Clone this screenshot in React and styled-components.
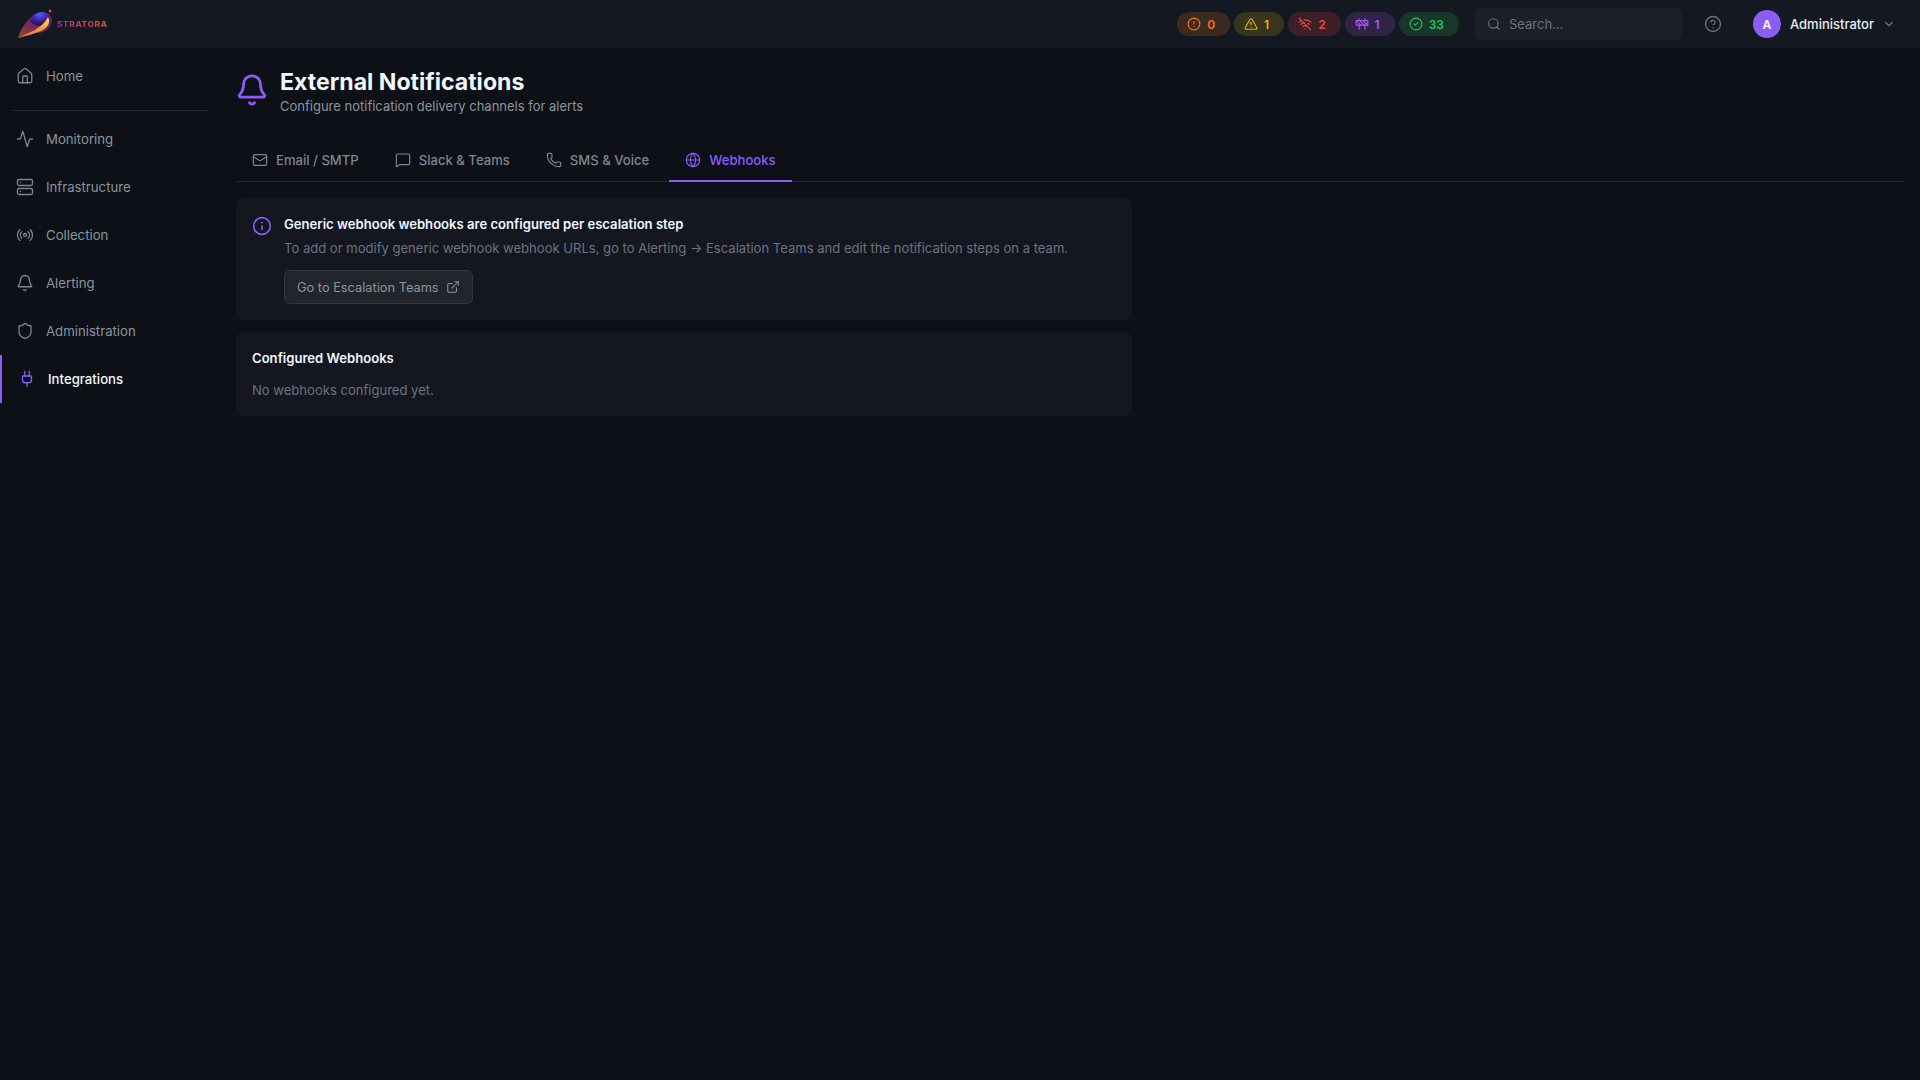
import React from "react";
import styled, { createGlobalStyle } from "styled-components";
import {
  Activity,
  Bell,
  ChevronDown,
  CircleAlert,
  CircleCheck,
  CircleHelp,
  Construction,
  ExternalLink,
  Globe,
  House,
  Info,
  Mail,
  MessageSquare,
  Phone,
  Plug,
  Radio,
  Search,
  Server,
  Shield,
  TriangleAlert,
  WifiOff,
} from "lucide-react";

const GlobalStyle = createGlobalStyle`
  html, body { margin: 0; padding: 0; height: 100%; background: #0d1017; }
  #root { height: 100%; }
  * { box-sizing: border-box; }
  body { font-family: Inter, "Noto Sans", sans-serif; }
`;

const badges = [
  { icon: CircleAlert, count: 0, color: "#f97316", bg: "#3a2a20" },
  { icon: TriangleAlert, count: 1, color: "#eab308", bg: "#38351e" },
  { icon: WifiOff, count: 2, color: "#ef4444", bg: "#3b2127" },
  { icon: Construction, count: 1, color: "#a855f7", bg: "#2f2446" },
  { icon: CircleCheck, count: 33, color: "#22c55e", bg: "#1a3529" },
];

const navItems = [
  { icon: Activity, label: "Monitoring" },
  { icon: Server, label: "Infrastructure" },
  { icon: Radio, label: "Collection" },
  { icon: Bell, label: "Alerting" },
  { icon: Shield, label: "Administration" },
  { icon: Plug, label: "Integrations", active: true },
];

const tabs = [
  { icon: Mail, label: "Email / SMTP" },
  { icon: MessageSquare, label: "Slack & Teams" },
  { icon: Phone, label: "SMS & Voice" },
  { icon: Globe, label: "Webhooks", active: true },
];

const Logo = () => (
  <svg width="36" height="30" viewBox="0 0 36 30">
    <defs>
      <linearGradient id="tail" x1="0" y1="1" x2="1" y2="0">
        <stop offset="0" stopColor="#f97316" />
        <stop offset="0.5" stopColor="#c42a90" />
        <stop offset="1" stopColor="#6d28d9" />
      </linearGradient>
      <linearGradient id="streak" x1="0" y1="1" x2="1" y2="0">
        <stop offset="0" stopColor="#fb7185" />
        <stop offset="0.55" stopColor="#fb923c" />
        <stop offset="1" stopColor="#fde047" />
      </linearGradient>
      <radialGradient id="globe" cx="0.5" cy="0.2" r="0.8">
        <stop offset="0" stopColor="#4560f0" />
        <stop offset="0.55" stopColor="#4220a8" />
        <stop offset="1" stopColor="#17133f" />
      </radialGradient>
    </defs>
    <path d="M1 29 C4 19 11 8 21 4 C29 1 35 6 35 12 C34 20 27 24 20 24 C14 25 7 27 1 29 Z" fill="url(#tail)" opacity="0.55" />
    <path d="M13 12 C15 6 21 2 27 3 C32 4 33 9 31 12 C27 17 19 19 13 12 Z" fill="url(#globe)" />
    <path d="M1 29 C11 24 25 20 31 8 C34 13 31 19 24 22 C16 25 8 27 1 29 Z" fill="url(#streak)" />
    <path d="M33 0 L33.6 1.4 L35 2 L33.6 2.6 L33 4 L32.4 2.6 L31 2 L32.4 1.4 Z" fill="#fb7185" />
  </svg>
);

export default function App() {
  return (
    <>
      <GlobalStyle />
      <Page>
        <TopBar>
          <Brand>
            <Logo />
            <BrandName>STRATORA</BrandName>
          </Brand>
          <TopRight>
            <Badges>
              {badges.map((b, i) => (
                <Badge key={i} $color={b.color} $bg={b.bg}>
                  <b.icon size={14} strokeWidth={2} />
                  <span>{b.count}</span>
                </Badge>
              ))}
            </Badges>
            <SearchBox>
              <Search size={14} color="#6b7280" />
              <SearchText>Search...</SearchText>
            </SearchBox>
            <HelpButton>
              <CircleHelp size={18} strokeWidth={1.75} />
            </HelpButton>
            <UserMenu>
              <Avatar>A</Avatar>
              <UserName>Administrator</UserName>
              <ChevronDown size={14} color="#6b7280" />
            </UserMenu>
          </TopRight>
        </TopBar>
        <Body>
          <Sidebar>
            <NavItem $short>
              <House size={18} strokeWidth={1.75} />
              <span>Home</span>
            </NavItem>
            <Divider />
            {navItems.map((item) => (
              <NavItem key={item.label} $active={item.active}>
                <item.icon size={18} strokeWidth={1.75} />
                <span>{item.label}</span>
              </NavItem>
            ))}
          </Sidebar>
          <Main>
            <Header>
              <HeaderIcon>
                <Bell size={34} strokeWidth={2} />
              </HeaderIcon>
              <div>
                <Title>External Notifications</Title>
                <Subtitle>Configure notification delivery channels for alerts</Subtitle>
              </div>
            </Header>
            <TabBar>
              {tabs.map((t) => (
                <Tab key={t.label} $active={t.active}>
                  <t.icon size={16} strokeWidth={1.75} />
                  <span>{t.label}</span>
                </Tab>
              ))}
            </TabBar>
            <Cards>
              <Card>
                <InfoIcon>
                  <Info size={20} strokeWidth={2} />
                </InfoIcon>
                <div>
                  <CardTitle>Generic webhook webhooks are configured per escalation step</CardTitle>
                  <CardText>
                    To add or modify generic webhook webhook URLs, go to Alerting → Escalation Teams and edit the notification steps on a team.
                  </CardText>
                  <LinkButton>
                    <span>Go to Escalation Teams</span>
                    <ExternalLink size={14} strokeWidth={1.75} />
                  </LinkButton>
                </div>
              </Card>
              <Card>
                <div>
                  <CardTitle>Configured Webhooks</CardTitle>
                  <EmptyText>No webhooks configured yet.</EmptyText>
                </div>
              </Card>
            </Cards>
          </Main>
        </Body>
      </Page>
    </>
  );
}

const Page = styled.div`
  display: flex;
  flex-direction: column;
  min-height: 100vh;
  background: #0d1017;
`;

const TopBar = styled.header`
  display: flex;
  align-items: center;
  justify-content: space-between;
  height: 48px;
  padding: 0 24px 0 17px;
  background: #141921;
`;

const Brand = styled.div`
  display: flex;
  align-items: center;
  gap: 4px;
`;

const BrandName = styled.span`
  display: inline-block;
  width: 50px;
  font-size: 7px;
  font-weight: 700;
  letter-spacing: 0.5px;
  white-space: nowrap;
  transform: scaleX(1.2);
  transform-origin: left center;
  background: linear-gradient(90deg, #a82ea8, #d8504c 70%, #ef7a3c);
  -webkit-background-clip: text;
  background-clip: text;
  color: transparent;
`;

const TopRight = styled.div`
  display: flex;
  align-items: center;
`;

const Badges = styled.div`
  display: flex;
  gap: 4px;
`;

const Badge = styled.div`
  display: flex;
  align-items: center;
  gap: 6px;
  height: 24px;
  padding: 0 15px 0 10px;
  border-radius: 12px;
  background: ${(p) => p.$bg};
  color: ${(p) => p.$color};
  font-size: 12px;
  font-weight: 600;
`;

const SearchBox = styled.div`
  display: flex;
  align-items: center;
  gap: 8px;
  width: 207px;
  height: 32px;
  margin-left: 16px;
  padding: 0 12px;
  border-radius: 6px;
  background: #1a1f28;
`;

const SearchText = styled.span`
  color: #6b7280;
  font-size: 13px;
`;

const HelpButton = styled.div`
  display: flex;
  margin-left: 22px;
  color: #6b7280;
`;

const UserMenu = styled.div`
  display: flex;
  align-items: center;
  margin-left: 31px;
`;

const Avatar = styled.div`
  display: flex;
  align-items: center;
  justify-content: center;
  width: 28px;
  height: 28px;
  border-radius: 50%;
  background: #8b5cf6;
  color: #fff;
  font-size: 12px;
  font-weight: 600;
`;

const UserName = styled.span`
  margin: 0 8px 0 9px;
  color: #e6edf3;
  font-size: 13px;
  font-weight: 500;
`;

const Body = styled.div`
  display: flex;
  flex: 1;
`;

const Sidebar = styled.nav`
  flex: 0 0 220px;
  display: flex;
  flex-direction: column;
`;

const NavItem = styled.div`
  display: flex;
  align-items: center;
  gap: 12px;
  height: ${(p) => (p.$short ? "56px" : "48px")};
  padding-left: 16px;
  border-left: ${(p) => (p.$active ? "2px solid #8b5cf6" : "none")};
  color: ${(p) => (p.$active ? "#f0f6fc" : "#8b949e")};
  font-size: 13.2px;
  font-weight: ${(p) => (p.$active ? 500 : 400)};
  svg {
    color: ${(p) => (p.$active ? "#8b5cf6" : "#7d8590")};
    flex-shrink: 0;
  }
`;

const Divider = styled.div`
  height: 1px;
  margin: 6px 12px 4px;
  background: #21262d;
`;

const Main = styled.main`
  flex: 1;
  padding: 16px;
`;

const Header = styled.div`
  display: flex;
  align-items: flex-start;
  gap: 11px;
  padding-top: 1px;
  margin-bottom: 25px;
`;

const HeaderIcon = styled.div`
  display: flex;
  margin: 8px 0 0 -1px;
  color: #8b5cf6;
`;

const Title = styled.h1`
  margin: 1px 0 0;
  color: #f0f6fc;
  font-size: 23.1px;
  font-weight: 700;
  line-height: 32px;
`;

const Subtitle = styled.p`
  margin: -1px 0 0;
  color: #8b949e;
  font-size: 13px;
  line-height: 18px;
`;

const TabBar = styled.div`
  display: flex;
  gap: 4px;
  border-bottom: 1px solid #21262d;
`;

const Tab = styled.div`
  display: flex;
  align-items: center;
  gap: 8px;
  height: 42px;
  padding: 0 16px;
  border-bottom: 2px solid ${(p) => (p.$active ? "#8b5cf6" : "transparent")};
  margin-bottom: -1px;
  color: ${(p) => (p.$active ? "#8b5cf6" : "#7d8590")};
  font-size: 13.1px;
  font-weight: 500;
`;

const Cards = styled.div`
  display: flex;
  flex-direction: column;
  gap: 12px;
  width: 896px;
  margin-top: 16px;
`;

const Card = styled.section`
  display: flex;
  gap: 12px;
  padding: 16px;
  border-radius: 8px;
  background: #141720;
`;

const InfoIcon = styled.div`
  display: flex;
  padding-top: 2px;
  color: #8b5cf6;
`;

const CardTitle = styled.h3`
  margin: 0;
  color: #f0f6fc;
  font-size: 13.1px;
  font-weight: 600;
  line-height: 20px;
`;

const CardText = styled.p`
  margin: 4px 0 0;
  color: #6b7280;
  font-size: 13.05px;
  line-height: 20px;
`;

const EmptyText = styled(CardText)`
  margin-top: 12px;
`;

const LinkButton = styled.div`
  display: inline-flex;
  align-items: center;
  gap: 7px;
  height: 34px;
  margin-top: 12px;
  padding: 0 12px;
  border: 1px solid #30363d;
  border-radius: 6px;
  background: #21262d;
  color: #8b949e;
  font-size: 12.8px;
`;
